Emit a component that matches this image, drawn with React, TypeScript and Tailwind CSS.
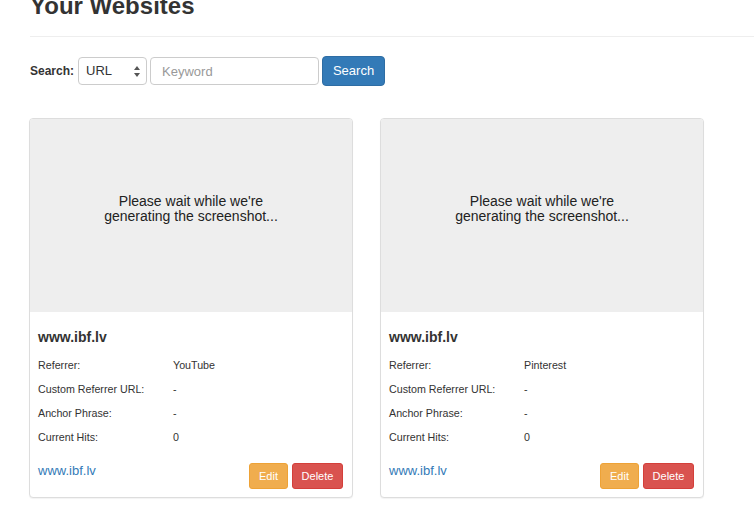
import React from 'react';

type Site = {
  name: string;
  referrer: string;
  customUrl: string;
  anchor: string;
  hits: number;
};

const sites: Site[] = [
  { name: 'www.ibf.lv', referrer: 'YouTube', customUrl: '-', anchor: '-', hits: 0 },
  { name: 'www.ibf.lv', referrer: 'Pinterest', customUrl: '-', anchor: '-', hits: 0 },
];

const SelectArrows: React.FC = () => (
  <svg width="6" height="11" viewBox="0 0 6 11" className="text-[#555]">
    <path d="M3 0 L6 4 L0 4 Z" fill="currentColor" />
    <path d="M3 11 L6 7 L0 7 Z" fill="currentColor" />
  </svg>
);

const SiteCard: React.FC<{ site: Site }> = ({ site }) => {
  const rows: [string, string][] = [
    ['Referrer:', site.referrer],
    ['Custom Referrer URL:', site.customUrl],
    ['Anchor Phrase:', site.anchor],
    ['Current Hits:', String(site.hits)],
  ];

  return (
    <div className="w-[324px] border border-[#ddd] rounded-[4px] bg-white shadow-[0_1px_1px_rgba(0,0,0,0.05)] overflow-hidden">
      <div className="h-[193px] bg-[#eee] flex items-center justify-center pb-[13px]">
        <p className="text-[14px] leading-[15px] text-[#222] text-center">
          Please wait while we're
          <br />
          generating the screenshot...
        </p>
      </div>
      <div className="pl-[8px] pr-[9px] pt-[15px] pb-[8px]">
        <h3 className="text-[14px] leading-[20px] font-bold text-[#333]">{site.name}</h3>
        <div className="mt-[6px]">
          {rows.map(([label, value]) => (
            <div key={label} className="flex h-[24px] items-center text-[10.7px] text-[#333]">
              <span className="w-[135px]">{label}</span>
              <span>{value}</span>
            </div>
          ))}
        </div>
        <div className="mt-[14px] flex items-start justify-between">
          <a href="#" className="text-[13px] leading-[18px] -mt-px text-[#337ab7]">
            {site.name}
          </a>
          <div className="flex gap-[4px]">
            <button className="w-[39px] h-[26px] rounded-[3px] border border-[#eea236] bg-[#f0ad4e] text-[11px] text-white">
              Edit
            </button>
            <button className="w-[51px] h-[26px] rounded-[3px] border border-[#d43f3a] bg-[#d9534f] text-[11px] text-white">
              Delete
            </button>
          </div>
        </div>
      </div>
    </div>
  );
};

const App: React.FC = () => {
  return (
    <div className="min-h-screen bg-white flex flex-col pl-[29px] overflow-hidden font-['Liberation_Sans',Arial,sans-serif] text-[#333]">
      <div className="ml-px border-b border-[#eee] pb-[17px] flex flex-col">
        <h1 className="-mt-[7px] text-[24px] leading-[26px] font-bold text-[#333]">Your Websites</h1>
      </div>

      <div className="mt-[19px] ml-px flex items-center h-[30px]">
        <label className="text-[12px] font-bold text-[#333]">Search:</label>
        <div className="ml-[4px] w-[69px] h-[28px] border border-[#ccc] rounded-[4px] bg-white flex items-center justify-between pl-[7px] pr-[6px]">
          <span className="text-[13px] text-[#333]">URL</span>
          <SelectArrows />
        </div>
        <input
          type="text"
          placeholder="Keyword"
          className="ml-[3px] w-[169px] h-[28px] border border-[#ccc] rounded-[4px] px-[11px] text-[13px] text-[#333] placeholder:text-[#999] outline-none"
        />
        <button className="ml-[3px] w-[63px] h-[30px] rounded-[4px] border border-[#2e6da4] bg-[#337ab7] text-[13px] text-white">
          Search
        </button>
      </div>

      <div className="mt-[32px] flex gap-[27px]">
        {sites.map((s, i) => (
          <SiteCard key={i} site={s} />
        ))}
      </div>
    </div>
  );
};

export default App;
